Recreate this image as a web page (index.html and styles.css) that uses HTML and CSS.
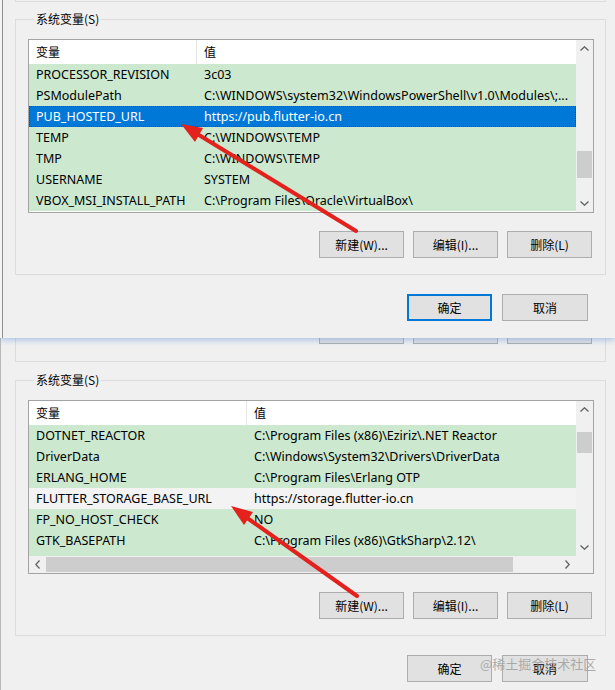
FILE: index.html
```html
<!DOCTYPE html>
<html lang="zh-CN">
<head>
<meta charset="utf-8">
<title>系统变量</title>
<link rel="stylesheet" href="styles.css">
</head>
<body>
<section class="dialog dialog-top">
  <div class="prev-box"></div>
  <fieldset class="group">
    <legend>系统变量(S)</legend>
    <div class="list">
      <div class="list-main">
        <div class="hdr"><div class="c1">变量</div><div class="c2">值</div></div>
        <div class="row"><div class="c1">PROCESSOR_REVISION</div><div class="c2">3c03</div></div>
        <div class="row"><div class="c1">PSModulePath</div><div class="c2">C:\WINDOWS\system32\WindowsPowerShell\v1.0\Modules\;...</div></div>
        <div class="row sel"><div class="c1">PUB_HOSTED_URL</div><div class="c2">https://pub.flutter-io.cn</div></div>
        <div class="row"><div class="c1">TEMP</div><div class="c2">C:\WINDOWS\TEMP</div></div>
        <div class="row"><div class="c1">TMP</div><div class="c2">C:\WINDOWS\TEMP</div></div>
        <div class="row"><div class="c1">USERNAME</div><div class="c2">SYSTEM</div></div>
        <div class="row"><div class="c1">VBOX_MSI_INSTALL_PATH</div><div class="c2">C:\Program Files\Oracle\VirtualBox\</div></div>
      </div>
      <div class="vscroll vs-top">
        <div class="arrow-btn"><svg width="9" height="5" viewBox="0 0 9 5"><path d="M0.5 4.5 L4.5 0.8 L8.5 4.5" fill="none" stroke="#606060" stroke-width="1.3"/></svg></div>
        <div class="vthumb"></div>
        <div class="spacer"></div>
        <div class="arrow-btn"><svg width="9" height="5" viewBox="0 0 9 5"><path d="M0.5 0.5 L4.5 4.2 L8.5 0.5" fill="none" stroke="#606060" stroke-width="1.3"/></svg></div>
      </div>
    </div>
    <div class="btn-row">
      <div class="btn">新建(W)...</div>
      <div class="btn">编辑(I)...</div>
      <div class="btn">删除(L)</div>
    </div>
  </fieldset>
  <div class="dlg-btns">
    <div class="btn primary">确定</div>
    <div class="btn wide">取消</div>
  </div>
</section>

<section class="dialog dialog-bottom">
  <div class="prev-box2">
    <div class="btn-row clipped">
      <div class="btn"></div>
      <div class="btn"></div>
      <div class="btn"></div>
    </div>
  </div>
  <fieldset class="group group2">
    <legend>系统变量(S)</legend>
    <div class="list list2">
      <div class="list-main">
        <div class="hdr"><div class="c1">变量</div><div class="c2">值</div></div>
        <div class="row"><div class="c1">DOTNET_REACTOR</div><div class="c2">C:\Program Files (x86)\Eziriz\.NET Reactor</div></div>
        <div class="row"><div class="c1">DriverData</div><div class="c2">C:\Windows\System32\Drivers\DriverData</div></div>
        <div class="row"><div class="c1">ERLANG_HOME</div><div class="c2">C:\Program Files\Erlang OTP</div></div>
        <div class="row hover"><div class="c1">FLUTTER_STORAGE_BASE_URL</div><div class="c2">https://storage.flutter-io.cn</div></div>
        <div class="row"><div class="c1">FP_NO_HOST_CHECK</div><div class="c2">NO</div></div>
        <div class="row"><div class="c1">GTK_BASEPATH</div><div class="c2">C:\Program Files (x86)\GtkSharp\2.12\</div></div>
        <div class="row"><div class="c1"></div><div class="c2"></div></div>
      </div>
      <div class="vscroll vs-bottom">
        <div class="arrow-btn"><svg width="9" height="5" viewBox="0 0 9 5"><path d="M0.5 4.5 L4.5 0.8 L8.5 4.5" fill="none" stroke="#606060" stroke-width="1.3"/></svg></div>
        <div class="vthumb"></div>
        <div class="spacer"></div>
        <div class="arrow-btn"><svg width="9" height="5" viewBox="0 0 9 5"><path d="M0.5 0.5 L4.5 4.2 L8.5 0.5" fill="none" stroke="#606060" stroke-width="1.3"/></svg></div>
      </div>
      <div class="hscroll">
        <div class="arrow-btn h"><svg width="5" height="9" viewBox="0 0 5 9"><path d="M4.5 0.5 L0.8 4.5 L4.5 8.5" fill="none" stroke="#606060" stroke-width="1.3"/></svg></div>
        <div class="hthumb"></div>
        <div class="spacer"></div>
        <div class="arrow-btn h"><svg width="5" height="9" viewBox="0 0 5 9"><path d="M0.5 0.5 L4.2 4.5 L0.5 8.5" fill="none" stroke="#606060" stroke-width="1.3"/></svg></div>
      </div>
      <div class="corner"></div>
    </div>
    <div class="btn-row">
      <div class="btn">新建(W)...</div>
      <div class="btn">编辑(I)...</div>
      <div class="btn">删除(L)</div>
    </div>
  </fieldset>
  <div class="dlg-btns">
    <div class="btn primary plain">确定</div>
    <div class="btn wide">取消</div>
  </div>
</section>

<svg class="arrows" width="615" height="690" viewBox="0 0 615 690">
  <line x1="356" y1="231" x2="194" y2="132" stroke="#e3221d" stroke-width="4" stroke-linecap="round"/>
  <polygon points="181,124 203,128 195,142" fill="#e3221d"/>
  <line x1="357" y1="596" x2="243" y2="515" stroke="#e3221d" stroke-width="4" stroke-linecap="round"/>
  <polygon points="231,506 253,512 244,525" fill="#e3221d"/>
</svg>

<div class="watermark">@稀土掘金技术社区</div>
</body>
</html>
```

FILE: styles.css
```css
* { box-sizing: border-box; }

html, body {
  margin: 0;
  padding: 0;
}

body {
  position: relative;
  width: 615px;
  height: 690px;
  overflow: hidden;
  background: #f0f0f0;
  color: #000;
  font-family: "Noto Sans", "Noto Sans CJK SC", sans-serif;
  font-size: 12.5px;
}

.dialog {
  display: flex;
  flex-direction: column;
  padding: 0 9px 0 15px;
}

.dialog-top {
  position: relative;
  z-index: 2;
  height: 338px;
  background: linear-gradient(to right, #f4f4f4 0, #f4f4f4 2px, #8e8e8e 2px, #8e8e8e 3px, #f0f0f0 3px);
  box-shadow: 0 2px 6px rgba(110, 155, 220, 0.55);
}

.dialog-bottom {
  height: 352px;
  background: linear-gradient(to right, #b9b9b9 0, #b9b9b9 1px, #f0f0f0 1px);
}

.prev-box {
  height: 2px;
  border: 1px solid #dcdcdc;
  border-top: 0;
}

.prev-box2 {
  height: 24px;
  border: 1px solid #dcdcdc;
  border-top: 0;
  padding: 0 13px 17px 0;
}

.group {
  margin: 9px 0 0 0;
  padding: 12px 11px 16px 12px;
  border: 1px solid #dcdcdc;
  min-width: 0;
}

.group2 { margin-top: 10px; }

.group legend {
  padding: 0 2px;
  margin-left: 6px;
  line-height: 16px;
  font-size: 12px;
  font-family: "Noto Sans CJK SC", sans-serif;
}

.list {
  height: 174px;
  border: 1px solid #a3a3a3;
  background: #fff;
  display: grid;
  grid-template-columns: 1fr 17px;
}

.list2 {
  grid-template-rows: 155px 17px;
}

.list-main {
  overflow: hidden;
  min-width: 0;
}

.hdr {
  display: flex;
  height: 24px;
  line-height: 24px;
  background: #fff;
  font-family: "Noto Sans CJK SC", sans-serif;
  font-size: 12px;
}

.c1 {
  flex: none;
  width: 168px;
  padding-left: 7px;
  white-space: nowrap;
  overflow: hidden;
}

.c2 {
  flex: 1;
  padding-left: 7px;
  white-space: nowrap;
  overflow: hidden;
}

.hdr .c1 { border-right: 1px solid #e5e5e5; }

.list2 .c1 { width: 218px; }

.row {
  display: flex;
  height: 21px;
  line-height: 21px;
  background: #cce8cf;
}

.row.sel {
  background: #0078d7;
  color: #fff;
  outline: 1px dotted #1c4f7c;
  outline-offset: -1px;
}

.row.hover { background: #f3f3f3; }

.vscroll {
  display: flex;
  flex-direction: column;
  align-items: center;
  background: #f0f0f0;
}

.arrow-btn {
  flex: none;
  width: 17px;
  height: 17px;
  display: flex;
  align-items: center;
  justify-content: center;
}

.spacer { flex: 1; }

.vthumb {
  flex: none;
  width: 15px;
  background: #cdcdcd;
}

.vs-top .vthumb { margin-top: 94px; height: 27px; }
.vs-bottom .vthumb { margin-top: 14px; height: 21px; }

.hscroll {
  display: flex;
  align-items: center;
  background: #f0f0f0;
}

.hthumb {
  flex: none;
  width: 467px;
  height: 15px;
  background: #cdcdcd;
}

.corner { background: #f0f0f0; }

.btn-row {
  display: flex;
  justify-content: flex-end;
  gap: 9px;
  margin: 18px 2px 0 0;
}

.btn-row.clipped {
  margin: 0;
  height: 6px;
  overflow: hidden;
  align-items: flex-end;
}

.btn {
  flex: none;
  width: 85px;
  height: 27px;
  background: #e1e1e1;
  border: 1px solid #adadad;
  display: flex;
  align-items: center;
  justify-content: center;
  font-size: 12px;
  font-family: "Noto Sans CJK SC", sans-serif;
}

.dlg-btns {
  display: flex;
  justify-content: flex-end;
  gap: 10px;
  margin: 19px 18px 0 0;
}

.btn.wide { width: 86px; }

.btn.primary {
  border: 2px solid #0078d7;
}

.btn.primary.plain {
  border: 1px solid #adadad;
}

.arrows {
  position: absolute;
  left: 0;
  top: 0;
  z-index: 5;
  pointer-events: none;
}

.watermark {
  position: absolute;
  left: 480px;
  top: 654px;
  z-index: 6;
  font-family: "Noto Sans CJK SC", sans-serif;
  font-size: 13px;
  color: rgba(150, 150, 150, 0.75);
  white-space: nowrap;
}
```
